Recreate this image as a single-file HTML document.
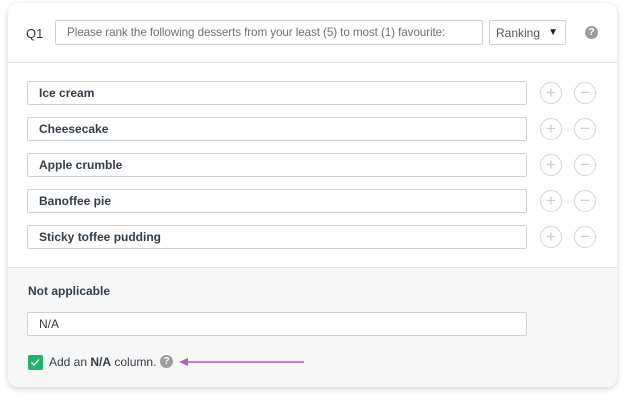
<!DOCTYPE html>
<html><head><style>
*{box-sizing:border-box;margin:0;padding:0}
body{width:625px;height:400px;background:#fff;font-family:"Liberation Sans",sans-serif;position:relative;overflow:hidden}
.card{position:absolute;left:8px;top:3px;width:609px;height:384px;border-radius:10px;background:#fff;box-shadow:0 2px 6px rgba(0,0,0,.18);overflow:hidden}
.bot{position:absolute;left:0;top:264px;width:100%;height:120px;background:#f7f7f7;border-top:1px solid #e3e3e3}
.a{position:absolute}
.inp{position:absolute;background:#fff;border:1px solid #cfd2d4;border-radius:2px;font-size:12px;color:#333e48;padding-left:11px;display:flex;align-items:center;white-space:nowrap;overflow:hidden}
.b{font-weight:bold}
.c{position:absolute;width:22px;height:22px;border:1px solid #d2d4d6;border-radius:50%;color:#c8cacc;font-size:17px;line-height:19px;text-align:center}
.q{position:absolute;width:13px;height:13px;border-radius:50%;background:#9b9da0;color:#fff;font-size:10px;font-weight:bold;text-align:center;line-height:13px}
</style></head><body>
<div class="card">
<div class="bot"></div>
<div class="a" style="left:18px;top:23px;font-size:13px;color:#333e48">Q1</div>
<div class="inp" style="left:47px;top:17px;width:428px;height:25px;color:#6b7177;font-size:11.7px;letter-spacing:-0.1px">Please rank the following desserts from your least (5) to most (1) favourite:</div>
<div class="inp" style="left:481px;top:17px;width:77px;height:25px;font-size:12px;color:#555;padding-left:6px">Ranking<span style="position:absolute;right:7px;font-size:10px;color:#222">▼</span></div>
<div class="q" style="left:577px;top:23px">?</div>
<div class="a" style="left:0;top:59px;width:609px;height:1px;background:#e3e3e3"></div>
<div class="inp b" style="left:19px;top:78px;width:500px;height:24px">Ice cream</div>
<div class="inp b" style="left:19px;top:114px;width:500px;height:24px">Cheesecake</div>
<div class="inp b" style="left:19px;top:150px;width:500px;height:24px">Apple crumble</div>
<div class="inp b" style="left:19px;top:186px;width:500px;height:24px">Banoffee pie</div>
<div class="inp b" style="left:19px;top:222px;width:500px;height:24px">Sticky toffee pudding</div>
<div class="c" style="left:532px;top:79px">+</div><div class="c" style="left:566px;top:79px">−</div>
<div class="c" style="left:532px;top:115px">+</div><div class="c" style="left:566px;top:115px">−</div>
<div class="c" style="left:532px;top:151px">+</div><div class="c" style="left:566px;top:151px">−</div>
<div class="c" style="left:532px;top:187px">+</div><div class="c" style="left:566px;top:187px">−</div>
<div class="c" style="left:532px;top:223px">+</div><div class="c" style="left:566px;top:223px">−</div>
<div class="a b" style="left:20px;top:281px;font-size:12px;color:#333e48">Not applicable</div>
<div class="inp" style="left:19px;top:309px;width:500px;height:24px">N/A</div>
<div class="a" style="left:20px;top:352px;width:15px;height:15px;background:#1fb36b;border-radius:2px"><svg width="15" height="15"><path d="M3.5 7.5l2.5 2.5 5-5.5" stroke="#fff" stroke-width="1.4" fill="none"/></svg></div>
<div class="a" style="left:41px;top:352px;font-size:12px;color:#333e48">Add an <b>N/A</b> column.</div>
<div class="q" style="left:152px;top:352px">?</div>
<svg class="a" style="left:170px;top:354px" width="130" height="10"><path d="M4 5H126" stroke="#b65fb8" stroke-width="1.5"/><path d="M1 5l9-4v8z" fill="#b65fb8"/></svg>
</div>
</body></html>
